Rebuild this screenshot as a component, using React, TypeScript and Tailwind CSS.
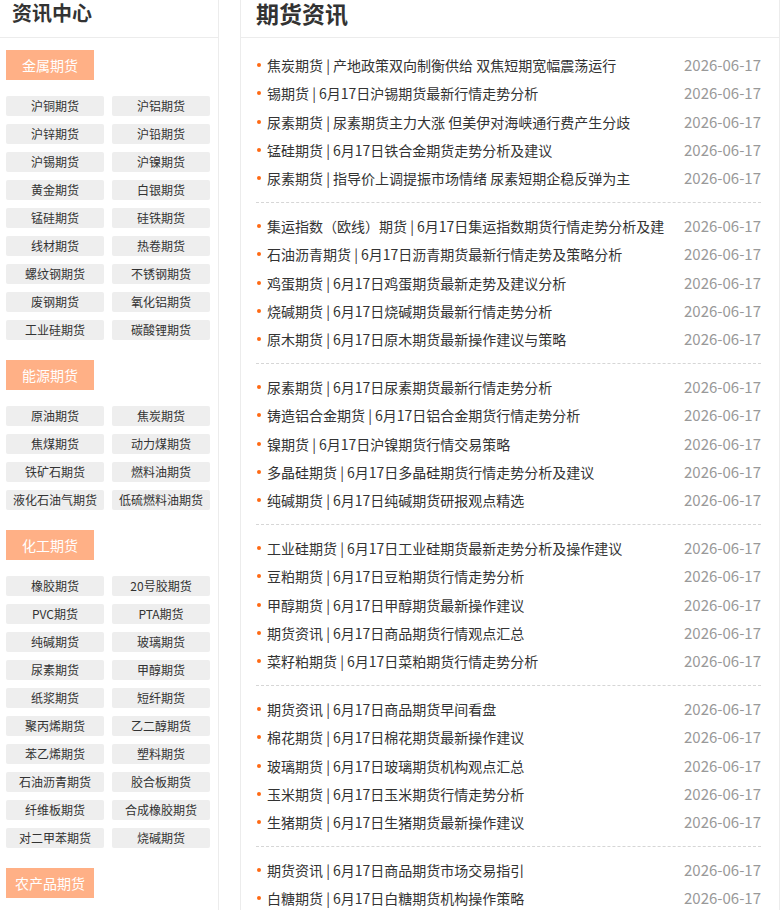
const categories: { name: string; items: string[] }[] = [
  {
    name: '金属期货',
    items: [
      '沪铜期货', '沪铝期货', '沪锌期货', '沪铅期货', '沪锡期货', '沪镍期货',
      '黄金期货', '白银期货', '锰硅期货', '硅铁期货', '线材期货', '热卷期货',
      '螺纹钢期货', '不锈钢期货', '废钢期货', '氧化铝期货', '工业硅期货', '碳酸锂期货',
    ],
  },
  {
    name: '能源期货',
    items: [
      '原油期货', '焦炭期货', '焦煤期货', '动力煤期货',
      '铁矿石期货', '燃料油期货', '液化石油气期货', '低硫燃料油期货',
    ],
  },
  {
    name: '化工期货',
    items: [
      '橡胶期货', '20号胶期货', 'PVC期货', 'PTA期货', '纯碱期货', '玻璃期货',
      '尿素期货', '甲醇期货', '纸浆期货', '短纤期货', '聚丙烯期货', '乙二醇期货',
      '苯乙烯期货', '塑料期货', '石油沥青期货', '胶合板期货', '纤维板期货', '合成橡胶期货',
      '对二甲苯期货', '烧碱期货',
    ],
  },
  {
    name: '农产品期货',
    items: ['豆一期货', '豆二期货', '豆粕期货', '豆油期货', '玉米期货', '棉花期货'],
  },
];

const news: string[][] = [
  [
    '焦炭期货 | 产地政策双向制衡供给 双焦短期宽幅震荡运行',
    '锡期货 | 6月17日沪锡期货最新行情走势分析',
    '尿素期货 | 尿素期货主力大涨 但美伊对海峡通行费产生分歧',
    '锰硅期货 | 6月17日铁合金期货走势分析及建议',
    '尿素期货 | 指导价上调提振市场情绪 尿素短期企稳反弹为主',
  ],
  [
    '集运指数（欧线）期货 | 6月17日集运指数期货行情走势分析及建',
    '石油沥青期货 | 6月17日沥青期货最新行情走势及策略分析',
    '鸡蛋期货 | 6月17日鸡蛋期货最新走势及建议分析',
    '烧碱期货 | 6月17日烧碱期货最新行情走势分析',
    '原木期货 | 6月17日原木期货最新操作建议与策略',
  ],
  [
    '尿素期货 | 6月17日尿素期货最新行情走势分析',
    '铸造铝合金期货 | 6月17日铝合金期货行情走势分析',
    '镍期货 | 6月17日沪镍期货行情交易策略',
    '多晶硅期货 | 6月17日多晶硅期货行情走势分析及建议',
    '纯碱期货 | 6月17日纯碱期货研报观点精选',
  ],
  [
    '工业硅期货 | 6月17日工业硅期货最新走势分析及操作建议',
    '豆粕期货 | 6月17日豆粕期货行情走势分析',
    '甲醇期货 | 6月17日甲醇期货最新操作建议',
    '期货资讯 | 6月17日商品期货行情观点汇总',
    '菜籽粕期货 | 6月17日菜粕期货行情走势分析',
  ],
  [
    '期货资讯 | 6月17日商品期货早间看盘',
    '棉花期货 | 6月17日棉花期货最新操作建议',
    '玻璃期货 | 6月17日玻璃期货机构观点汇总',
    '玉米期货 | 6月17日玉米期货行情走势分析',
    '生猪期货 | 6月17日生猪期货最新操作建议',
  ],
  [
    '期货资讯 | 6月17日商品期货市场交易指引',
    '白糖期货 | 6月17日白糖期货机构操作策略',
    '沪铜期货 | 6月17日沪铜期货最新行情走势分析',
    '原油期货 | 6月17日原油期货最新操作建议',
    '豆油期货 | 6月17日豆油期货行情走势分析',
  ],
];

function Sidebar() {
  return (
    <aside className="w-[219px] shrink-0 border-r border-[#ececec]">
      <div className="h-[38px] border-b border-[#ececec] pl-[12px]">
        <h2 className="text-[20px] leading-[26px] font-bold text-[#333]">资讯中心</h2>
      </div>
      <div className="pt-[12px] pl-[6px] pr-[8px]">
        {categories.map((c) => (
          <div key={c.name} className="mb-[20px]">
            <div className="w-[88px] h-[30px] bg-[#ffb086] text-white text-[14px] leading-[30px] text-center">
              {c.name}
            </div>
            <div className="mt-[16px] grid grid-cols-[98px_98px] gap-[8px]">
              {c.items.map((t) => (
                <a
                  key={t}
                  href="#"
                  className="block h-[20px] rounded-[2px] bg-[#eeeeee] text-center text-[12px] leading-[20px] text-[#333] whitespace-nowrap"
                >
                  {t}
                </a>
              ))}
            </div>
          </div>
        ))}
      </div>
    </aside>
  );
}

function NewsList() {
  return (
    <section className="ml-[21px] w-[540px] shrink-0 border-x border-[#ececec]">
      <div className="h-[38px] border-b border-[#ececec] pl-[15px]">
        <h1 className="text-[23px] leading-[26px] font-bold text-[#333]">期货资讯</h1>
      </div>
      <div className="pt-[4px] pl-[15px] pr-[18px]">
        {news.map((group, gi) => (
          <ul key={gi} className="pt-[9px] pb-[9.5px] border-b border-dashed border-[#d6d6d6]">
            {group.map((title, i) => (
              <li key={i} className="flex items-center h-[28.3px]">
                <span className="ml-[1px] w-[4px] h-[4px] rounded-full bg-[#ff6a13]" />
                <a
                  href="#"
                  className="ml-[6px] w-[406px] overflow-hidden whitespace-nowrap text-[14px] leading-[28px] text-[#333]"
                >
                  {title}
                </a>
                <span className="ml-auto text-[15px] leading-[28px] text-[#999]">2026-06-17</span>
              </li>
            ))}
          </ul>
        ))}
      </div>
    </section>
  );
}

export default function App() {
  return (
    <div className="flex items-start bg-white font-['Noto_Sans_CJK_SC','Liberation_Sans',sans-serif]">
      <Sidebar />
      <NewsList />
    </div>
  );
}
